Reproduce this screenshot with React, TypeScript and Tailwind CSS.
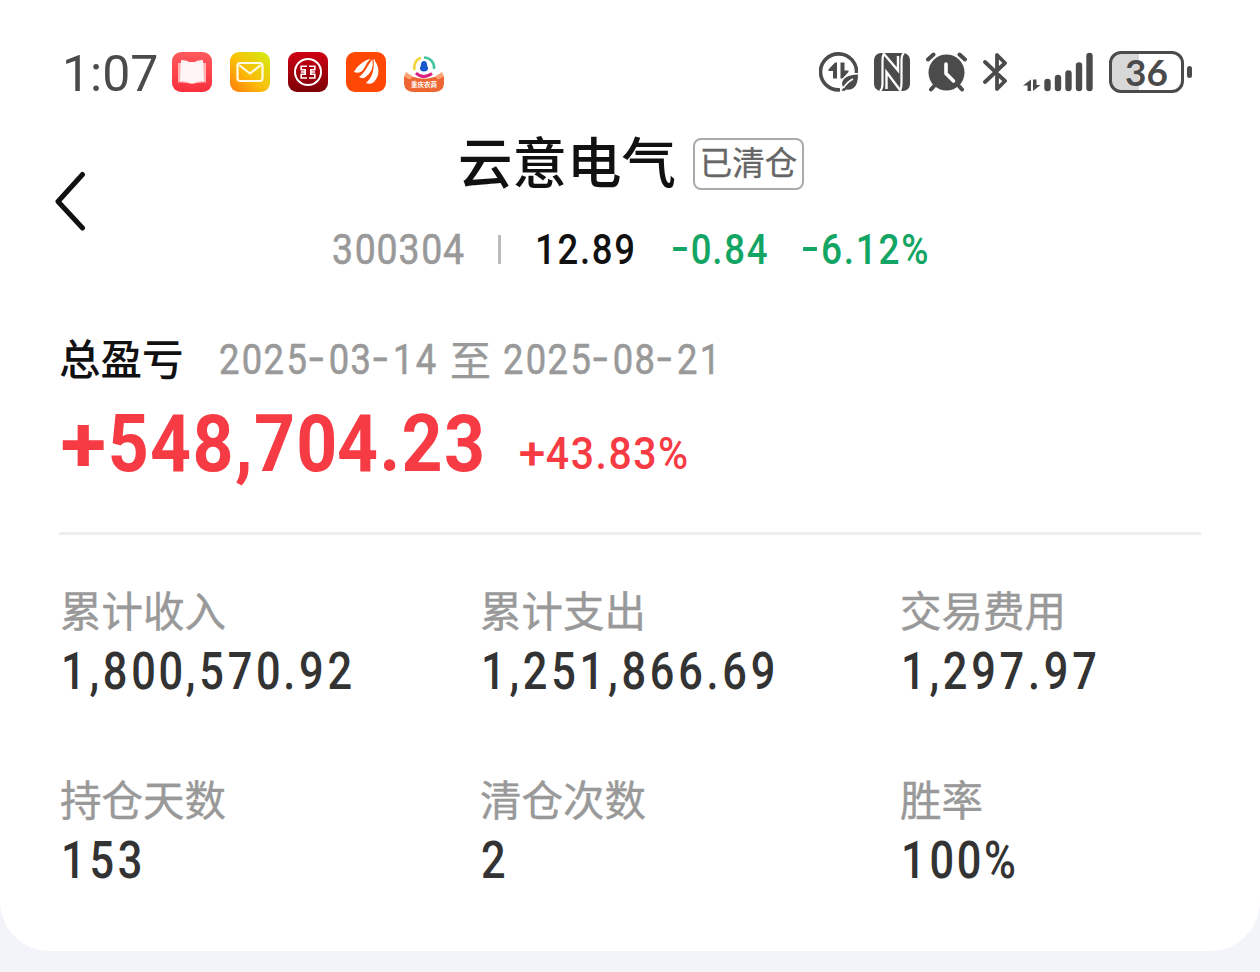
import React from "react";
import clsx from "clsx";

/* Narrow digits: signs are drawn wider than the font's own, zeros a little tighter. */
function Glyph({ c }: { c: string }) {
  if (c === "-") return <span className="inline-block w-[.54em] origin-left translate-y-[-.04em] scale-x-[1.45]">-</span>;
  if (c === "+") return <span className="inline-block w-[.68em] origin-left translate-x-[.02em] translate-y-[.01em] scale-x-[1.17]">+</span>;
  if (c === "0") return <span className="mr-[-.025em]">0</span>;
  return <>{c}</>;
}

/* A fixed-width slot that holds horizontally condensed text. */
function Num({ children, slot, className }: { children: string; slot: string; className: string }) {
  return (
    <span className={clsx("block shrink-0 whitespace-nowrap", slot)}>
      <span className={clsx("inline-block origin-left font-['Roboto','Liberation_Sans',sans-serif] leading-none", className)}>
        {children.split("").map((c, i) => (
          <Glyph key={i} c={c} />
        ))}
      </span>
    </span>
  );
}

function BookApp() {
  return (
    <svg className="size-10" viewBox="0 0 40 40">
      <defs>
        <linearGradient id="book" x1="0" y1="0" x2="0" y2="1">
          <stop offset="0" stopColor="#ff5a5c" />
          <stop offset="1" stopColor="#f8303c" />
        </linearGradient>
      </defs>
      <rect width="40" height="40" rx="9" fill="url(#book)" />
      <path d="M6 11h28v19.500q-8-.5-14 1.500q-6-2-14-1.500z" fill="#ffb3b5" />
      <path d="M9 8q6 .5 8 2h6q2-1.500 8-2l1 21q-7 0-12 2.500q-5-2.500-12-2.500z" fill="#fff5f5" />
    </svg>
  );
}

function MailApp() {
  return (
    <svg className="size-10" viewBox="0 0 40 40">
      <defs>
        <linearGradient id="mail" x1="0" y1="1" x2="1" y2="0">
          <stop offset="0" stopColor="#ff7a0c" />
          <stop offset=".45" stopColor="#fbbd08" />
          <stop offset="1" stopColor="#d2ed12" />
        </linearGradient>
      </defs>
      <rect width="40" height="40" rx="9" fill="url(#mail)" />
      <rect x="7.500" y="11" width="25" height="18" rx="2.500" fill="none" stroke="#fffbe6" strokeWidth="2.200" />
      <path d="M9 13l11 8.500L31 13" fill="none" stroke="#fffbe6" strokeWidth="2.200" strokeLinejoin="round" />
    </svg>
  );
}

function BankApp() {
  return (
    <svg className="size-10" viewBox="0 0 40 40">
      <defs>
        <linearGradient id="bank" x1="0" y1="0" x2="0" y2="1">
          <stop offset="0" stopColor="#cf0012" />
          <stop offset="1" stopColor="#7b0008" />
        </linearGradient>
      </defs>
      <rect width="40" height="40" rx="9" fill="url(#bank)" />
      <circle cx="20" cy="20" r="13" fill="none" stroke="#fff" strokeWidth="2" />
      <path
        d="M19 14.300H13.200V17.700H17.200V22.300H13.200V26H19M21 14.300H26.800V17.700H22.800V22.300H26.800V26H21M17 20H13M23 20H27"
        fill="none"
        stroke="#fff"
        strokeWidth="1.600"
      />
    </svg>
  );
}

function StocksApp() {
  return (
    <svg className="size-10" viewBox="0 0 40 40">
      <rect width="40" height="40" rx="9" fill="#ff4803" />
      <path d="M8 20C11 14 18 8 25 7C20 10 20 15 16 19Q13 22 8 20z" fill="#fff" />
      <path d="M13 25C20 20 22 12 26.500 7.500Q28.500 19 19 25.500Q16 27 13 25z" fill="#fff" />
      <path d="M20 31C27 25 28.500 16 27.500 7Q29 7 29 9C33.500 15 34 24 28 30Q25 33 20 31z" fill="#fff" />
    </svg>
  );
}

function PortalApp() {
  return (
    <svg className="size-10" viewBox="0 0 40 40">
      <path d="M10.500 18A10 10 0 0 1 17 5.800" fill="none" stroke="#f5d43a" strokeWidth="2.600" />
      <path d="M20 5.500A10 10 0 0 1 30 17" fill="none" stroke="#48c5a5" strokeWidth="2.600" />
      <path d="M12 21Q19 28 28 21.500" fill="none" stroke="#d91f7f" strokeWidth="3" />
      <path d="M20 9q3 0 3 4q3 6-3 6.500q-6-.5-3-6.500q0-4 3-4z" fill="#1558cc" />
      <path d="M0 24L10 25Q20 28.500 30 25L40 24V32Q39 40 30 40H10Q1 40 0 32z" fill="#ed6530" />
      <path d="M2 20l7 4.500l-3 3l-6-3zM38 20l-7 4.500l3 3l6-3z" fill="#ffa374" />
      <text x="20" y="34.500" textAnchor="middle" fontSize="6.500" fontWeight="700" fill="#fff" fontFamily="Noto Sans CJK SC, sans-serif">
        重庆农商
      </text>
    </svg>
  );
}

function StatusBar() {
  return (
    <div className="flex h-[104px] items-center justify-between pt-[40px] pr-[68px] pb-0 pl-[62px]">
      <div className="flex items-center">
        <span className="w-[110px] pt-[4px] font-['Roboto',sans-serif] text-[50px] leading-none text-[#4b4b4b]">1:07</span>
        <div className="flex gap-[18px]">
          <BookApp />
          <MailApp />
          <BankApp />
          <StocksApp />
          <PortalApp />
        </div>
      </div>
      <div className="flex items-center gap-4">
        <svg className="h-10 w-[39px]" viewBox="0 0 39 40">
          <path d="M37.500 21A18 18 0 1 0 21 37.800" fill="none" stroke="#4b4b4b" strokeWidth="3.600" />
          <path d="M18 26.500V10.500H16L9.500 17.500V19H14v7.500zM21.500 10.500v16H23.500L29.500 20V18.500H25.500V10.500z" fill="#4b4b4b" />
          <path d="M39 22.500Q24 23 23 31.500Q23 34 25 35L22.500 38.500L25.500 39L27 37.500Q39 39 39 22.500z" fill="#4b4b4b" />
          <path d="M24.500 36Q28 30 34 27" stroke="#fff" strokeWidth="1.500" fill="none" />
        </svg>
        <svg className="h-[38px] w-9" viewBox="0 0 36 38">
          <rect width="36" height="38" rx="7" fill="#4b4b4b" />
          <path d="M10 0Q8.500 3 8.500 8V30Q8.500 36 6 38M26 38Q27.500 35 27.500 30V8Q27.500 2 30 0" fill="none" stroke="#fff" strokeWidth="2.200" />
          <path d="M10 1L24 17.500V3M26 37L12.500 19V36" fill="none" stroke="#fff" strokeWidth="2.400" />
        </svg>
        <svg className="h-10 w-[41px]" viewBox="0 0 41 40">
          <path d="M2 7.500L7.500 2.500M39 7.500L33.500 2.500M9 33L5 37.500M32 33l4 4.500" stroke="#4b4b4b" strokeWidth="4" strokeLinecap="round" />
          <circle cx="20.500" cy="20.500" r="18" fill="#4b4b4b" />
          <path d="M20 12v9.500l7.500 7.500" fill="none" stroke="#fff" strokeWidth="3.600" strokeLinecap="round" strokeLinejoin="round" />
        </svg>
        <svg className="h-10 w-6" viewBox="0 0 24 40">
          <path d="M2 10L12 19.500M2 30L22 11L14 3V19M15 22.500L22 29L14 37V24" fill="none" stroke="#4b4b4b" strokeWidth="3.800" strokeLinecap="round" strokeLinejoin="round" />
        </svg>
        <svg className="h-10 w-[70px]" viewBox="0 0 70 40">
          <path d="M8 39V27.500L0 33.500h4.500v5.500zM10 27.500v11.500L17.500 33H13.500V27.500z" fill="#4b4b4b" />
          <path d="M24.500 30v6M35 26v10M45.500 21.500V36M56 13.500V36M66.500 4V36" stroke="#4b4b4b" strokeWidth="6.400" strokeLinecap="round" />
        </svg>
        <div className="flex items-center gap-[3px]">
          <div className="flex h-[42px] w-[75px] items-center justify-center rounded-[12px] border-[3px] border-[#4b4b4b] bg-linear-to-r from-[#d8d8d8] from-[39%] to-white to-[39%] pb-px font-['Lato','Roboto',sans-serif] text-[37px] leading-none font-bold text-[#4b4b4b]">
            36
          </div>
          <div className="h-3 w-[5px] rounded-full bg-[#4b4b4b]" />
        </div>
      </div>
    </div>
  );
}

function Header() {
  return (
    <header className="grid h-[190px] grid-cols-[100px_1fr_100px]">
      <button aria-label="返回" className="flex h-[194px] items-center pl-[54px]">
        <svg className="h-[60px] w-8" viewBox="0 0 32 60">
          <path d="M28.500 3.500L4 30.500L28.500 57" fill="none" stroke="#111" strokeWidth="5" strokeLinecap="round" strokeLinejoin="round" />
        </svg>
      </button>
      <div className="flex flex-col items-center">
        <div className="flex h-[116px] items-center gap-[17px] pl-[2px]">
          <h1 className="pb-[3px] text-[54.500px] leading-none font-medium text-[#111]">云意电气</h1>
          <span className="mt-[3px] flex h-[52px] w-[111px] items-center justify-center rounded-[8px] border-2 border-[#aaa] pb-[4px] text-[32.500px] leading-none text-[#666] [-webkit-text-stroke:.3px_#666]">
            已清仓
          </span>
        </div>
        <div className="flex h-[58px] items-center">
          <Num slot="w-[166px]" className="scale-x-[.87] text-[43px] tracking-[2px] text-[#999] [-webkit-text-stroke:.6px_#999]">300304</Num>
          <span className="h-[29px] w-[3px] bg-[#bbb]" />
          <Num slot="w-[136px] pl-[34px] box-content" className="scale-x-[.85] text-[43px] font-medium tracking-[2px] text-[#111]">12.89</Num>
          <Num slot="w-[130px]" className="scale-x-[.85] text-[43px] font-medium tracking-[2px] text-[#13a563]">-0.84</Num>
          <Num slot="w-[128px]" className="scale-x-[.86] text-[43px] font-medium tracking-[2px] text-[#13a563]">-6.12%</Num>
        </div>
      </div>
    </header>
  );
}

function Stat({ label, value }: { label: string; value: string }) {
  return (
    <div className="flex flex-col">
      <div className="flex h-[60px] items-center text-[41.500px] leading-none text-[#999] [-webkit-text-stroke:.4px_#999]">{label}</div>
      <div className="flex h-[62px] items-center">
        <Num slot="w-[340px] pl-px" className="scale-x-[.85] text-[51px] font-medium tracking-[4.400px] text-[#333]">{value}</Num>
      </div>
    </div>
  );
}

const stats = [
  { label: "累计收入", value: "1,800,570.92" },
  { label: "累计支出", value: "1,251,866.69" },
  { label: "交易费用", value: "1,297.97" },
  { label: "持仓天数", value: "153" },
  { label: "清仓次数", value: "2" },
  { label: "胜率", value: "100%" },
];

export default function App() {
  return (
    <div className="h-[972px] w-[1260px] overflow-hidden bg-[#f3f4f9] font-['Noto_Sans_CJK_SC',sans-serif]">
      <main className="h-[951px] rounded-b-[50px] bg-white">
        <StatusBar />
        <Header />
        <section className="mx-[59px] h-[241px] border-b-[3px] border-[#ededed] pt-[35px]">
          <div className="flex h-[60px] items-center">
            <h2 className="w-[160px] pb-[2px] text-[41.500px] leading-none font-medium text-[#111]">总盈亏</h2>
            <Num slot="w-[231px] pt-[2px]" className="scale-x-[.865] text-[42px] tracking-[2.700px] text-[#999] [-webkit-text-stroke:.6px_#999]">2025-03-14</Num>
            <span className="w-[53px] pb-[2px] text-[41px] leading-none text-[#999] [-webkit-text-stroke:.4px_#999]">至</span>
            <Num slot="w-[231px] pt-[2px]" className="scale-x-[.865] text-[42px] tracking-[2.700px] text-[#999] [-webkit-text-stroke:.6px_#999]">2025-08-21</Num>
          </div>
          <div className="flex h-[110px] items-center">
            <Num slot="w-[459px]" className="scale-x-[.895] text-[80px] font-bold tracking-[1.500px] text-[#f63b45]">+548,704.23</Num>
            <Num slot="w-[175px] pt-[18px]" className="scale-x-[.91] text-[45px] font-medium tracking-[1.700px] text-[#f63b45]">+43.83%</Num>
          </div>
        </section>
        <section className="grid grid-cols-[420px_420px_1fr] gap-y-[67px] pt-[45px] pl-[60px]">
          {stats.map((s) => (
            <Stat key={s.label} label={s.label} value={s.value} />
          ))}
        </section>
      </main>
    </div>
  );
}
